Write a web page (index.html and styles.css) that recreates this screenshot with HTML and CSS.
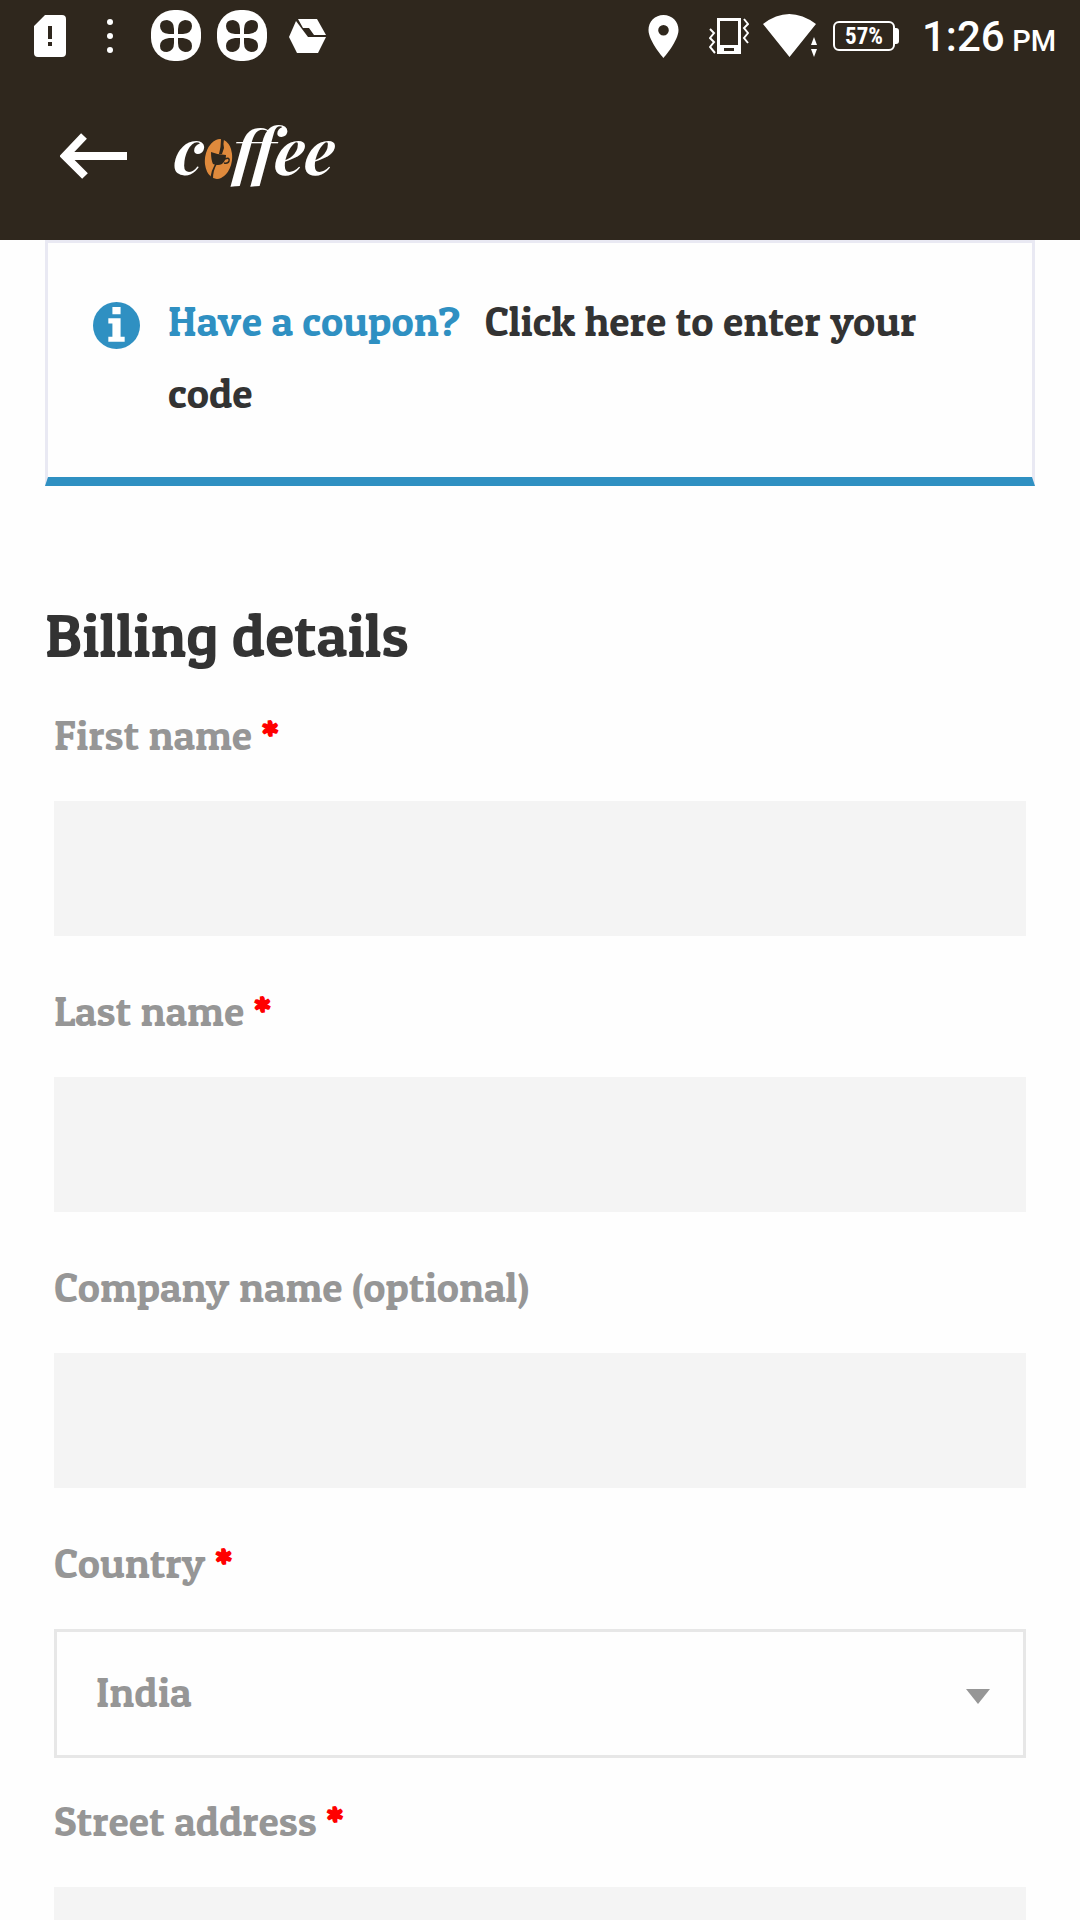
FILE: index.html
```html
<!DOCTYPE html>
<html lang="en">
<head>
<meta charset="utf-8">
<meta name="viewport" content="width=device-width, initial-scale=1">
<title>Checkout</title>
<link rel="stylesheet" href="styles.css">
</head>
<body>
<header class="top">
  <div class="status">
    <div class="status-left">
      <svg class="slot" viewBox="0 0 60 72" aria-hidden="true"><path fill="#fff" fill-rule="evenodd" d="M25 15h17q4 0 4 4v34q0 4-4 4H18q-4 0-4-4V26zM28 26v13h4V26zM28 42v4h4v-4z"/></svg>
      <svg class="slot" viewBox="0 0 60 72" aria-hidden="true"><g fill="#fff"><circle cx="30" cy="22" r="3"/><circle cx="30" cy="36" r="3"/><circle cx="30" cy="50" r="3"/></g></svg>
      <svg class="slot slot-wide" viewBox="0 0 72 72" aria-hidden="true"><use href="#clover" width="72" height="72"/></svg>
      <svg class="slot" viewBox="6 0 60 72" aria-hidden="true"><use href="#clover" width="72" height="72"/></svg>
      <svg class="slot slot-wide" viewBox="0 0 72 72" aria-hidden="true"><g fill="#fff"><path d="M26 19h19l9 16H42l-5-7H31z"/><path d="M24 21l12 16h18l-8 16H25L17 37z"/></g></svg>
    </div>
    <div class="status-right">
      <svg class="pin" viewBox="0 0 48 72" aria-hidden="true"><path fill="#fff" fill-rule="evenodd" d="M16.500 15C8 15 1.500 21.500 1.500 30c0 11 15 28 15 28s15-17 15-28c0-8.500-6.500-15-15-15zm0 10a5.300 5.300 0 1 1 0 10.600 5.300 5.300 0 0 1 0-10.600z"/></svg>
      <svg class="vibrate" viewBox="0 0 40 72" aria-hidden="true"><path fill="#fff" fill-rule="evenodd" d="M8 18h24v36H8zM11 21v24h18V21zM15 48v3h10v-3z"/><path d="M1 29l4 4-4 5 4 4-4 5 5 6M35 19l4 5-4 4 4 5-4 5 4 5" fill="none" stroke="#fff" stroke-width="2"/></svg>
      <svg class="wifi" viewBox="0 0 56 72" aria-hidden="true"><path fill="#fff" d="M0 24Q26 4 53 24L26.500 57zM51 37l3 8h-6zM48 49h6l-3 8z"/></svg>
      <div class="battery">57%</div>
      <div class="clock">1:26 <span class="meridiem">PM</span></div>
    </div>
  </div>
  <nav class="bar">
    <button class="back" type="button" aria-label="Back"><svg viewBox="0 0 68 48" width="68" height="48"><path d="M67 24H6M24 4L5 24l20 20" fill="none" stroke="#fff" stroke-width="8"/></svg></button>
    <a class="logo" href="#" aria-label="coffee">c<svg class="bean" viewBox="0 0 29 40" aria-hidden="true"><ellipse cx="14.500" cy="20" rx="13.500" ry="20" transform="rotate(8 14.500 20)" fill="#e08a3c"/><g fill="#2f271d"><path d="M17 0h3q-1 5 0 9l-2 6h-3q2-7 2-15zM13 25q-4 6-4 15H6q1-8 5-15z"/><path d="M7 13q7 3 15 3 0 6-4 9-4 2-9 0-2-4-2-12z"/></g><path d="M21 20q5-2 4 2-1 3-5 2" fill="none" stroke="#2f271d" stroke-width="1.500"/></svg>ffee</a>
  </nav>
</header>

<main class="page">
  <div class="notice">
    <svg class="info" viewBox="0 0 46 46" aria-hidden="true"><circle cx="23" cy="23" r="23" fill="#2f90c2"/><path fill="#fff" d="M19 5h8v7h-8zM15 16h12v18h4v5H15v-5h4V21h-4z"/></svg>
    <p class="notice-text"><span class="ask">Have a coupon?</span> <a class="reveal" href="#coupon">Click here to enter your code</a></p>
  </div>

  <form class="billing">
    <h1 class="heading">Billing details</h1>
    <div class="field">
      <label for="first">First name <span class="req">*</span></label>
      <input id="first" type="text" required>
    </div>
    <div class="field">
      <label for="last">Last name <span class="req">*</span></label>
      <input id="last" type="text" required>
    </div>
    <div class="field">
      <label for="company">Company name (optional)</label>
      <input id="company" type="text">
    </div>
    <div class="field field-select">
      <label for="country">Country <span class="req">*</span></label>
      <div class="select">
        <select id="country"><option>India</option></select>
        <svg class="caret" viewBox="0 0 24 15" aria-hidden="true"><path d="M0 0h24L12 15z" fill="#969696"/></svg>
      </div>
    </div>
    <div class="field">
      <label for="street">Street address <span class="req">*</span></label>
      <input id="street" type="text" required>
    </div>
  </form>
</main>

<svg width="0" height="0" class="defs" aria-hidden="true">
  <symbol id="clover" viewBox="0 0 72 72">
    <rect x="11" y="10" width="50" height="51" rx="23" fill="#fff"/>
    <g fill="#2f271d">
      <path id="leaf" d="M34 34h-5q-9-1-9-8 0-6 7-6 7 1 7 9z"/>
      <use href="#leaf" transform="matrix(-1 0 0 1 72 0)"/>
      <use href="#leaf" transform="matrix(1 0 0 -1 0 72)"/>
      <use href="#leaf" transform="matrix(-1 0 0 -1 72 72)"/>
    </g>
  </symbol>
</svg>
</body>
</html>
```
FILE: styles.css
```css
* {
  box-sizing: border-box;
}

body {
  margin: 0;
  height: 100vh;
  display: flex;
  flex-direction: column;
  background: #fefefe;
  color: #333;
  font: 42px/72px "Patua One", "Liberation Serif", serif;
}

svg {
  display: block;
  flex: none;
}

.defs {
  position: absolute;
}

.top {
  flex: none;
  background: #2f271d;
  color: #fff;
}

.status {
  height: 72px;
  display: flex;
  justify-content: space-between;
  padding: 0 24px 0 20px;
}

.status-left,
.status-right {
  display: flex;
}

.status-right {
  align-items: center;
  gap: 14px;
}

.slot {
  width: 60px;
  height: 72px;
}

.slot-wide {
  width: 72px;
}

.pin {
  width: 48px;
  height: 72px;
}

.vibrate {
  width: 40px;
  height: 72px;
}

.wifi {
  width: 56px;
  height: 72px;
}

.battery {
  position: relative;
  width: 62px;
  height: 30px;
  margin-right: 4px;
  border: 2px solid #fff;
  border-radius: 6px;
  font: bold 23px/27px "Roboto Condensed", Roboto, sans-serif;
  text-align: center;
}

.battery::after {
  content: "";
  position: absolute;
  top: 5px;
  right: -6px;
  width: 5px;
  height: 16px;
  border-radius: 0 3px 3px 0;
  background: #fff;
}

.clock {
  margin-left: 9px;
  padding-top: 6px;
  font: 500 42px/66px Roboto, sans-serif;
  white-space: nowrap;
}

.meridiem {
  margin-left: -3px;
  font-size: 29px;
}

.bar {
  height: 168px;
  display: flex;
  align-items: center;
  gap: 46px;
  padding: 0 60px;
}

.back {
  padding: 0;
  border: 0;
  background: none;
}

.logo {
  display: flex;
  align-items: center;
  padding-bottom: 14px;
  color: #fff;
  font: italic bold 64px/80px "Playfair Display", "Liberation Serif", serif;
  text-decoration: none;
}

.bean {
  width: 29px;
  height: 40px;
  margin-top: 20px;
}

.page {
  flex: 1;
  min-height: 0;
  overflow-y: auto;
  scrollbar-width: none;
  padding: 0 45px;
}

.notice {
  display: flex;
  align-items: flex-start;
  gap: 28px;
  padding: 42px 96px 48px 45px;
  border: 3px solid #e9e9f3;
  border-bottom: 9px solid #2f90c2;
}

.info {
  width: 47px;
  height: 47px;
  margin-top: 17px;
}

.notice-text {
  margin: 0;
}

.ask {
  margin-right: 15px;
  color: #2f90c2;
}

.reveal {
  color: inherit;
  text-decoration: none;
}

.billing {
  padding: 0 9px 40px;
}

.heading {
  margin: 114px -9px 27px;
  font-size: 60px;
  font-weight: normal;
  line-height: 72px;
}

.field {
  margin-bottom: 39px;
  color: #969696;
}

.field-select {
  margin-bottom: 27px;
}

.field label {
  display: block;
  margin-bottom: 30px;
}

.req {
  color: #f00;
  font-weight: bold;
}

.field input,
.field select {
  display: block;
  width: 100%;
  margin: 0;
  border-radius: 0;
  color: #969696;
  font: inherit;
}

.field input {
  height: 135px;
  padding: 0 40px;
  border: 0;
  background: #f4f4f4;
}

.select {
  position: relative;
}

.field select {
  height: 129px;
  padding: 0 40px 3px 39px;
  border: 3px solid #e7e7e7;
  background: #fefefe;
  appearance: none;
}

.caret {
  position: absolute;
  top: 60px;
  right: 36px;
  width: 24px;
  height: 15px;
  pointer-events: none;
}
```
